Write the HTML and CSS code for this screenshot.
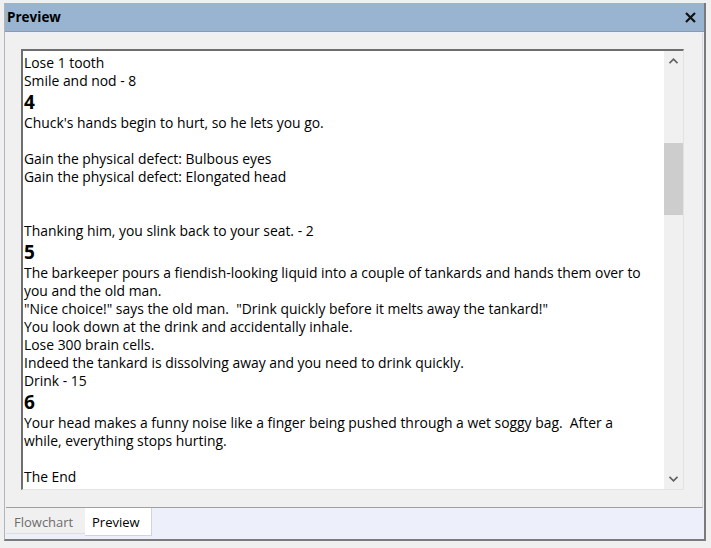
FILE: index.html
```html
<!DOCTYPE html>
<html>
<head>
<meta charset="utf-8">
<link rel="stylesheet" href="styles.css">
</head>
<body>
<div class="window">
  <div class="titlebar">
    <span class="title">Preview</span>
    <svg class="close" width="11" height="11" viewBox="0 0 11 11"><path d="M1 1 L10 10 M10 1 L1 10" stroke="#111" stroke-width="2.2" fill="none"/></svg>
  </div>
  <div class="body">
    <div class="panel">
      <div class="textbox">
        <div class="text">
          <div class="line">Lose 1 tooth</div>
          <div class="line">Smile and nod - 8</div>
          <div class="head">4</div>
          <div class="line">Chuck's hands begin to hurt, so he lets you go.</div>
          <div class="line"></div>
          <div class="line">Gain the physical defect: Bulbous eyes</div>
          <div class="line">Gain the physical defect: Elongated head</div>
          <div class="line"></div>
          <div class="line"></div>
          <div class="line">Thanking him, you slink back to your seat. - 2</div>
          <div class="head">5</div>
          <div class="line">The barkeeper pours a fiendish-looking liquid into a couple of tankards and hands them over to you and the old man.</div>
          <div class="line">"Nice choice!" says the old man.  "Drink quickly before it melts away the tankard!"</div>
          <div class="line">You look down at the drink and accidentally inhale.</div>
          <div class="line">Lose 300 brain cells.</div>
          <div class="line">Indeed the tankard is dissolving away and you need to drink quickly.</div>
          <div class="line">Drink - 15</div>
          <div class="head">6</div>
          <div class="line">Your head makes a funny noise like a finger being pushed through a wet soggy bag.  After a while, everything stops hurting.</div>
          <div class="line"></div>
          <div class="line">The End</div>
        </div>
        <div class="scrollbar">
          <div class="arrow">
            <svg width="9" height="6" viewBox="0 0 9 6"><path d="M0.5 5.2 L4.5 1.2 L8.5 5.2" fill="none" stroke="#606060" stroke-width="1.6"/></svg>
          </div>
          <div class="track">
            <div class="thumb"></div>
          </div>
          <div class="arrow">
            <svg width="9" height="6" viewBox="0 0 9 6"><path d="M0.5 0.8 L4.5 4.8 L8.5 0.8" fill="none" stroke="#606060" stroke-width="1.6"/></svg>
          </div>
        </div>
      </div>
    </div>
    <div class="tabs">
      <div class="tab">Flowchart</div>
      <div class="tab active">Preview</div>
    </div>
  </div>
</div>
</body>
</html>
```
FILE: styles.css
```css
html, body {
  margin: 0;
  padding: 0;
  background: #f0f0f0;
  font-family: "Open Sans", "Noto Sans", "DejaVu Sans", sans-serif;
}
.window {
  margin: 3px 0 0 4px;
  width: 699px;
  height: 536px;
  border-left: 1px solid #b4b4b4;
  border-right: 2px solid #7a7a7a;
  border-bottom: 2px solid #7a7a7a;
  display: flex;
  flex-direction: column;
  background: #edf0fa;
}
.titlebar {
  height: 29px;
  flex: none;
  background: #99b4d1;
  border-bottom: 1px solid #8e9aa8;
  display: flex;
  align-items: center;
  justify-content: space-between;
  padding: 0 8px 0 2px;
  box-sizing: border-box;
}
.title {
  font-weight: bold;
  font-size: 13.5px;
  color: #000;
}
.close {
  display: block;
}
.body {
  flex: 1;
  display: flex;
  flex-direction: column;
  padding: 0 1px 0 1px;
}
.panel {
  height: 475px;
  flex: none;
  background: #f0f0f0;
  border-right: 1px solid #d9d9d9;
  border-bottom: 1px solid #a0a0a0;
  margin-top: 1px;
  padding: 16px 18px 17px 15px;
  box-sizing: border-box;
  display: flex;
}
.textbox {
  flex: 1;
  display: flex;
  background: #fff;
  border-top: 2px solid #6e6e6e;
  border-left: 2px solid #6e6e6e;
  border-right: 1px solid #e3e3e3;
  border-bottom: 1px solid #e3e3e3;
  overflow: hidden;
}
.text {
  flex: 1;
  padding: 3px 17px 0 1px;
  font-size: 13.9px;
  color: #000;
  overflow: hidden;
}
.line {
  line-height: 18px;
  min-height: 18px;
  white-space: pre-wrap;
}
.head {
  font-weight: bold;
  font-size: 19px;
  line-height: 24px;
}
.scrollbar {
  width: 19px;
  flex: none;
  background: #f0f0f0;
  display: flex;
  flex-direction: column;
}
.arrow {
  height: 20px;
  display: flex;
  align-items: center;
  justify-content: center;
  flex: none;
}
.track {
  flex: 1;
  padding-top: 72px;
}
.thumb {
  height: 72px;
  background: #cdcdcd;
}
.tabs {
  display: flex;
  height: 28px;
  font-size: 13px;
}
.tab {
  padding: 5px 8px 0 8px;
  width: 79px;
  box-sizing: border-box;
  color: #6d6d6d;
  background: #f0f0f0;
  height: 26px;
  border-bottom: 1px solid #dcdcdc;
}
.tab.active {
  width: 67px;
  color: #000;
  background: #fff;
  height: 28px;
  padding-left: 7px;
  border-right: 1px solid #d4d4d4;
  border-bottom: 1px solid #d4d4d4;
}
```
